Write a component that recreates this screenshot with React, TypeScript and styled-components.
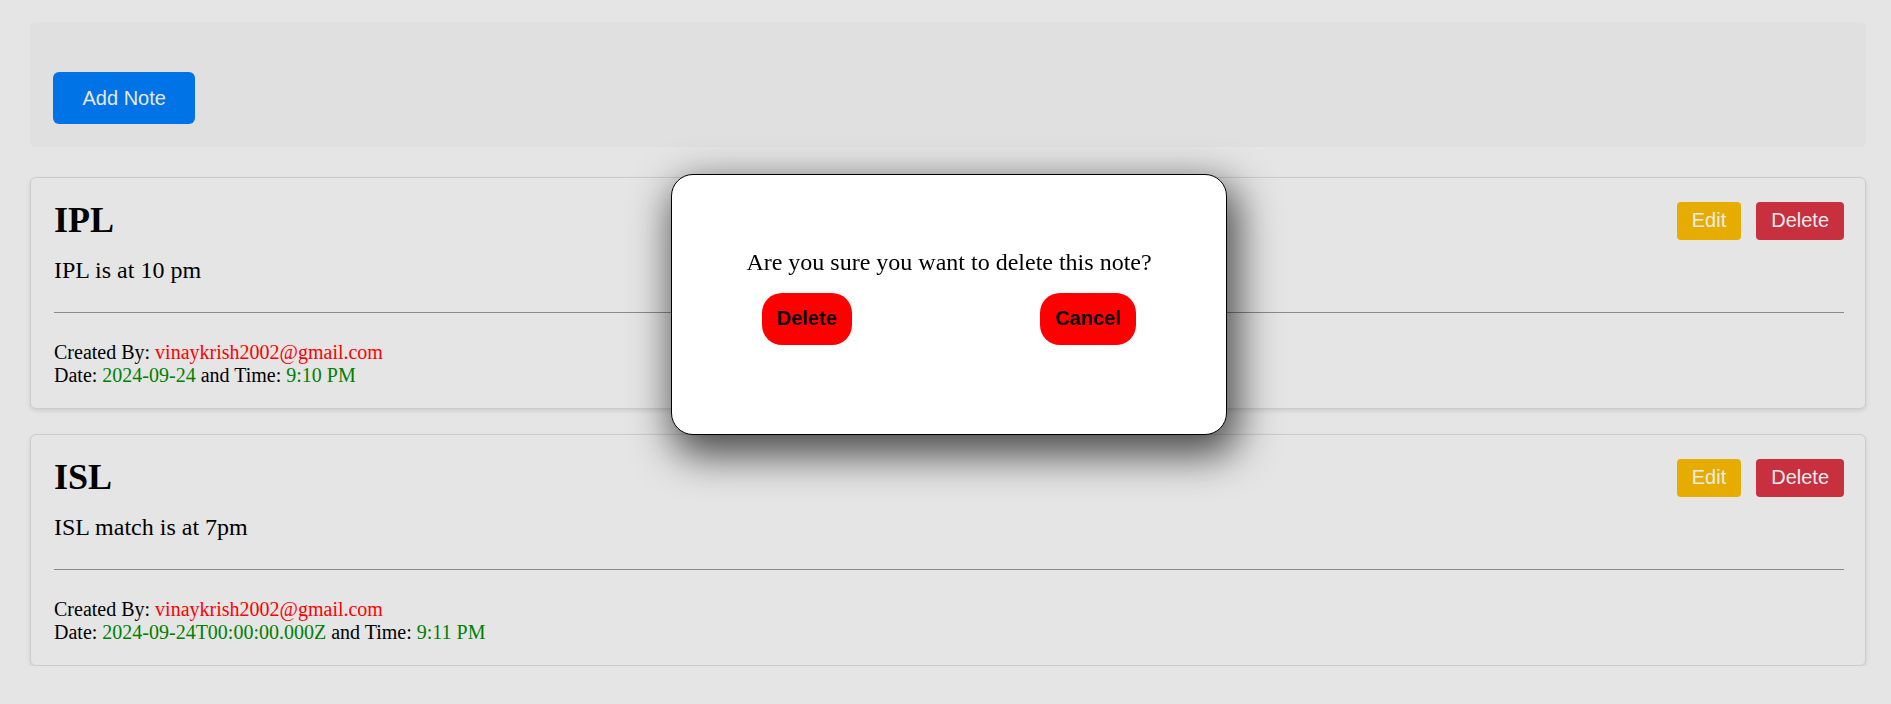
import React from "react";
import styled, { createGlobalStyle } from "styled-components";

interface Note {
  id: number;
  title: string;
  body: string;
  author: string;
  date: string;
  time: string;
}

const notes: Note[] = [
  {
    id: 1,
    title: "IPL",
    body: "IPL is at 10 pm",
    author: "vinaykrish2002@gmail.com",
    date: "2024-09-24",
    time: "9:10 PM",
  },
  {
    id: 2,
    title: "ISL",
    body: "ISL match is at 7pm",
    author: "vinaykrish2002@gmail.com",
    date: "2024-09-24T00:00:00.000Z",
    time: "9:11 PM",
  },
];

const NoteCard: React.FC<{ note: Note }> = ({ note }) => {
  return (
    <Card>
      <CardHeader>
        <Title>{note.title}</Title>
        <Actions>
          <SmallButton tone="edit">Edit</SmallButton>
          <SmallButton tone="delete">Delete</SmallButton>
        </Actions>
      </CardHeader>
      <Body>{note.body}</Body>
      <Divider />
      <Meta>
        Created By: <Highlight tone="red">{note.author}</Highlight>
        <br />
        Date: <Highlight tone="green">{note.date}</Highlight> and Time:{" "}
        <Highlight tone="green">{note.time}</Highlight>
      </Meta>
    </Card>
  );
};

const App: React.FC = () => {
  return (
    <>
      <GlobalStyle />
      <Page>
        <Toolbar>
          <AddButton>Add Note</AddButton>
        </Toolbar>
        <NoteList>
          {notes.map((n) => (
            <NoteCard key={n.id} note={n} />
          ))}
        </NoteList>
      </Page>
      <Modal>
        <Question>Are you sure you want to delete this note?</Question>
        <ModalActions>
          <ModalButton>Delete</ModalButton>
          <ModalButton>Cancel</ModalButton>
        </ModalActions>
      </Modal>
    </>
  );
};

export default App;

const GlobalStyle = createGlobalStyle`
  html, body {
    margin: 0;
    background: #e5e5e5;
    font-family: "Liberation Serif", "Times New Roman", serif;
    color: #000;
  }
`;

const Page = styled.div`
  padding: 22px 25px 0 30px;
`;

const Toolbar = styled.div`
  background: #e0e0e0;
  border-radius: 6px;
  padding: 50px 23px 23px;
`;

const AddButton = styled.button`
  background: #0073e6;
  color: #e8e8e8;
  border: none;
  border-radius: 6px;
  padding: 14.5px 29.5px;
  font-family: "Liberation Sans", Arial, sans-serif;
  font-size: 20px;
  line-height: 23px;
  cursor: pointer;
`;

const NoteList = styled.div`
  margin-top: 30px;
  display: flex;
  flex-direction: column;
  gap: 25px;
`;

const Card = styled.div`
  background: #e5e5e5;
  border: 1px solid #cccccc;
  border-radius: 6px;
  box-shadow: 0 2px 4px rgba(0, 0, 0, 0.1);
  padding: 22px 21px 21px 23px;
`;

const CardHeader = styled.div`
  display: flex;
  justify-content: space-between;
  align-items: center;
`;

const Title = styled.h1`
  margin: 0;
  font-size: 36px;
  line-height: 1.15;
  font-weight: bold;
`;

const Actions = styled.div`
  display: flex;
  gap: 15px;
`;

const SmallButton = styled.button<{ tone: "edit" | "delete" }>`
  background: ${(p) => (p.tone === "edit" ? "#e6ad00" : "#c82f3f")};
  color: #ececec;
  border: none;
  border-radius: 4px;
  padding: 7.5px 15px;
  font-family: "Liberation Sans", Arial, sans-serif;
  font-size: 20px;
  line-height: 23px;
  cursor: pointer;
`;

const Body = styled.p`
  margin: 16px 0 0;
  font-size: 24px;
  line-height: 1.15;
`;

const Divider = styled.hr`
  margin: 27px 0 28px;
  border: none;
  border-top: 1px solid #8a8a8a;
`;

const Meta = styled.div`
  font-size: 20px;
  line-height: 23px;
`;

const Highlight = styled.span<{ tone: "red" | "green" }>`
  color: ${(p) => (p.tone === "red" ? "#ff0000" : "#008000")};
`;

const Modal = styled.div`
  position: fixed;
  top: 174px;
  left: 671px;
  width: 556px;
  height: 261px;
  box-sizing: border-box;
  background: #ffffff;
  border: 1px solid #000;
  border-radius: 22px;
  box-shadow: 6px 15px 40px 5px rgba(0, 0, 0, 0.68);
  padding-top: 74px;
  display: flex;
  flex-direction: column;
  align-items: center;
`;

const Question = styled.p`
  margin: 0;
  font-size: 24px;
  line-height: 1.15;
`;

const ModalActions = styled.div`
  align-self: stretch;
  display: flex;
  justify-content: space-between;
  padding: 0 90px;
  margin-top: 16px;
`;

const ModalButton = styled.button`
  background: #ff0000;
  color: #000;
  border: none;
  border-radius: 20px;
  padding: 14.5px 15px;
  font-family: "Liberation Sans", Arial, sans-serif;
  font-weight: bold;
  font-size: 20px;
  line-height: 23px;
  cursor: pointer;
`;
